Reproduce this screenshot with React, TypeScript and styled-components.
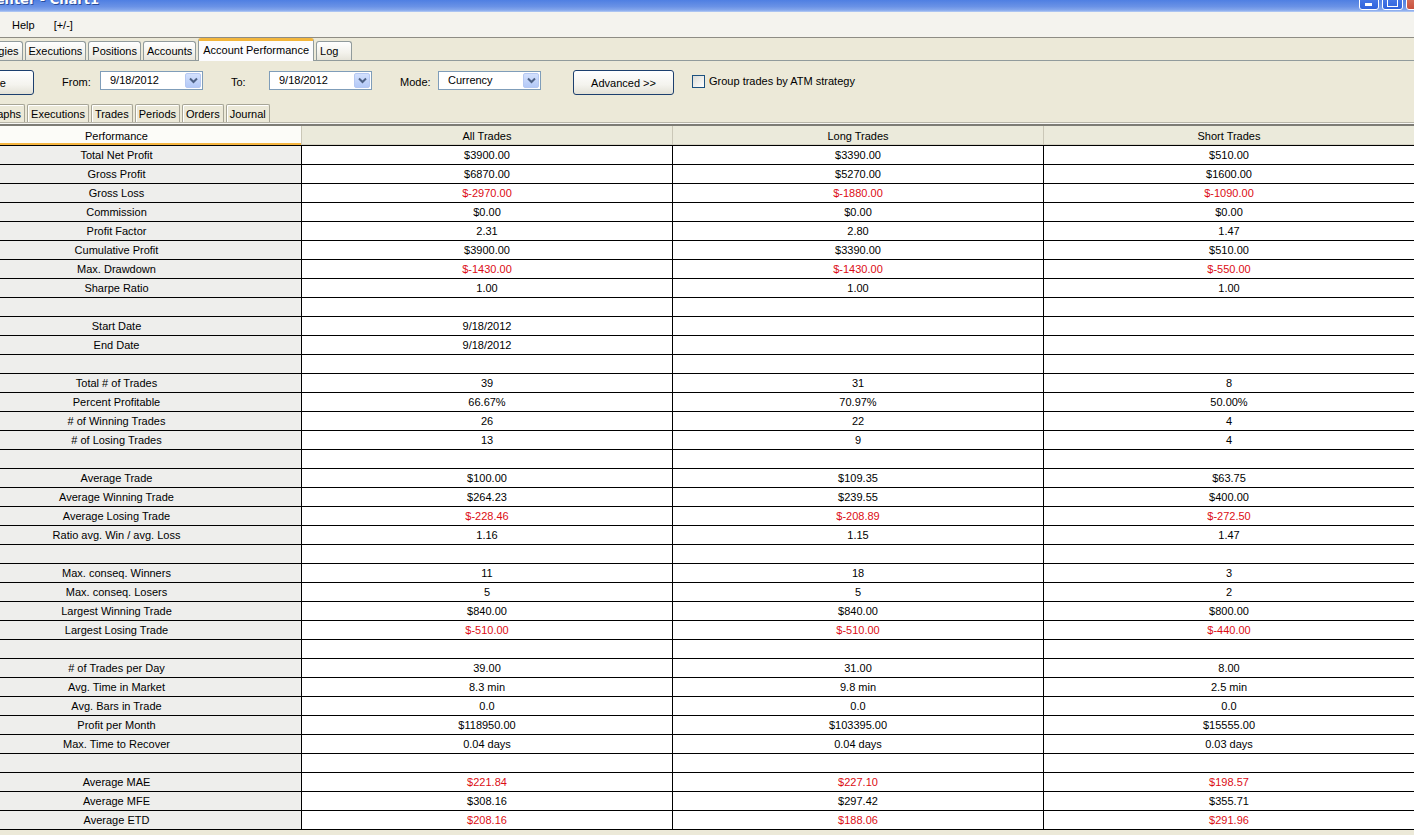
import React from "react";
import styled, { createGlobalStyle } from "styled-components";

const GlobalStyle = createGlobalStyle`
  html, body { margin: 0; padding: 0; overflow: hidden; }
  body { font-family: "Liberation Sans", Arial, sans-serif; font-size: 11px; color: #000; }
  * { box-sizing: border-box; }
`;

const Screen = styled.div`
  width: 1414px;
  height: 835px;
  overflow: hidden;
  background: #ece9d8;
`;

const Window = styled.div`
  width: 1482px;
  margin-left: -68px;
  display: flex;
  flex-direction: column;
`;

const TitleBar = styled.div`
  height: 12px;
  display: flex;
  justify-content: space-between;
  align-items: flex-start;
  overflow: hidden;
  background: linear-gradient(to bottom, #4f7fe2 0%, #6a92e6 55%, #86a8ec 85%, #b8cdf4 100%);
`;

const TitleText = styled.div`
  margin-top: -9px;
  margin-left: -4px;
  font-family: "DejaVu Sans", "Liberation Sans", sans-serif;
  font-weight: bold;
  font-size: 13px;
  line-height: 18px;
  color: #fff;
  text-shadow: 1px 1px 0 #2a4c9c;
`;

const WinButtons = styled.div`
  display: flex;
  gap: 3px;
  margin-right: -13px;
`;

const WinButton = styled.div<{ $w: number; $close?: boolean }>`
  width: ${(p) => p.$w}px;
  height: 21px;
  margin-top: -11px;
  border: 1px solid #fff;
  border-radius: 3px;
  background: ${(p) =>
    p.$close
      ? "linear-gradient(to bottom, #e08a78, #c8503c)"
      : "linear-gradient(to bottom, #5c8cf0, #2f62dc)"};
  position: relative;
`;

const MinBar = styled.div`
  position: absolute;
  left: 5px;
  bottom: 3px;
  width: 7px;
  height: 3px;
  background: #fff;
`;

const MaxBox = styled.div`
  position: absolute;
  left: 4px;
  bottom: 2px;
  width: 11px;
  height: 11px;
  border: 1px solid #fff;
  border-top-width: 3px;
`;

const MenuBar = styled.div`
  height: 26px;
  display: flex;
  align-items: center;
  gap: 19px;
  padding-left: 80px;
  background: #f4f3ee;
  border-bottom: 1px solid #8e8c84;
`;

const MenuItem = styled.span`
  font-size: 11px;
  line-height: 14px;
`;

const TabStrip = styled.div`
  height: 23px;
  display: flex;
  align-items: flex-end;
  gap: 2px;
  padding-left: 33px;
  background: #ece9d8;
  border-bottom: 1px solid #919b9c;
`;

const Tab = styled.div<{ $active?: boolean }>`
  height: ${(p) => (p.$active ? 23 : 19)}px;
  min-width: 36px;
  margin-bottom: ${(p) => (p.$active ? -1 : 0)}px;
  padding: 0 ${(p) => (p.$active ? 4 : 3)}px;
  display: flex;
  align-items: center;
  border: 1px solid #919b9c;
  border-bottom: none;
  border-top: ${(p) => (p.$active ? "3px solid #f3b63c" : "1px solid #919b9c")};
  border-radius: 3px 3px 0 0;
  background: ${(p) => (p.$active ? "#fcfcfe" : "linear-gradient(to bottom, #ffffff, #f3f2ec 60%, #e6e4da)")};
  padding-bottom: ${(p) => (p.$active ? 3 : 0)}px;
  white-space: nowrap;
`;

const Toolbar = styled.div`
  height: 40px;
  display: flex;
  align-items: center;
  gap: 28px;
  padding-left: 0;
`;

const XPButton = styled.div<{ $w: number; $ml?: number }>`
  width: ${(p) => p.$w}px;
  height: 25px;
  margin-left: ${(p) => p.$ml ?? 0}px;
  margin-top: 3px;
  border: 1px solid #1c3f6e;
  border-radius: 3px;
  background: linear-gradient(to bottom, #ffffff 0%, #f4f3ee 60%, #e3e1d6 100%);
  display: flex;
  align-items: center;
  justify-content: center;
  font-size: 11px;
`;

const Field = styled.div`
  display: flex;
  align-items: center;
`;

const FieldLabel = styled.span`
  width: 38px;
  margin-top: 2px;
`;

const Combo = styled.div`
  width: 103px;
  height: 19px;
  margin-top: -2px;
  border: 1px solid #7f9db9;
  background: #fff;
  display: flex;
  align-items: center;
  justify-content: space-between;
  padding: 0 1px 0 9px;
`;

const ComboArrow = styled.div`
  width: 16px;
  height: 15px;
  border: 1px solid #b5c8f2;
  border-radius: 2px;
  background: linear-gradient(to bottom, #d3e0fd, #b3c9f7);
  display: flex;
  align-items: center;
  justify-content: center;
`;

const CheckGroup = styled.div`
  display: flex;
  align-items: center;
  gap: 4px;
  margin-left: -10px;
`;

const CheckBox = styled.div`
  width: 13px;
  height: 13px;
  border: 1px solid #1c5180;
  background: linear-gradient(135deg, #dcdcd6, #ffffff);
`;

const SubTabs = styled.div`
  height: 21px;
  display: flex;
  align-items: flex-end;
  gap: 2px;
  padding-left: 49px;
`;

const SubTab = styled.div`
  height: 18px;
  padding: 0 3px;
  display: flex;
  align-items: center;
  border: 1px solid #a7a596;
  border-bottom: none;
  border-radius: 2px 2px 0 0;
  box-shadow: inset 1px 1px 0 #ffffff;
  white-space: nowrap;
`;

const Separator = styled.div`
  height: 4px;
  border-top: 1px solid #b8b6a9;
  background: #f7f7f4;
  border-bottom: 2px solid #7d7c75;
`;

const GRID = "369px 371px 371px 371px";

const HeaderRow = styled.div`
  height: 19px;
  display: grid;
  grid-template-columns: ${GRID};
`;

const HeaderCell = styled.div<{ $first?: boolean }>`
  display: flex;
  align-items: center;
  justify-content: center;
  padding-top: 1px;
  background: ${(p) => (p.$first ? "#fcfcf8" : "#ebeadb")};
  box-shadow: ${(p) => (p.$first ? "inset 0 -2px 0 #f5b540" : "inset 0 -1px 0 #d6d3c4")};
  border-left: ${(p) => (p.$first ? "none" : "1px solid #cac7b7")};
`;

const Table = styled.div`
  display: flex;
  flex-direction: column;
  border-bottom: 1px solid #000;
`;

const Row = styled.div`
  height: 19px;
  display: grid;
  grid-template-columns: ${GRID};
  border-top: 1px solid #000;
`;

const LabelCell = styled.div`
  background: #eeeeec;
  text-align: center;
  line-height: 18px;
  white-space: nowrap;
`;

const ValueCell = styled.div<{ $neg?: boolean }>`
  background: #fff;
  border-left: 1px solid #000;
  text-align: center;
  line-height: 18px;
  color: ${(p) => (p.$neg ? "#dc0c14" : "#000")};
  white-space: nowrap;
`;

type R = [string, string, string, string, boolean?];

const rows: R[] = [
  ["Total Net Profit", "$3900.00", "$3390.00", "$510.00"],
  ["Gross Profit", "$6870.00", "$5270.00", "$1600.00"],
  ["Gross Loss", "$-2970.00", "$-1880.00", "$-1090.00", true],
  ["Commission", "$0.00", "$0.00", "$0.00"],
  ["Profit Factor", "2.31", "2.80", "1.47"],
  ["Cumulative Profit", "$3900.00", "$3390.00", "$510.00"],
  ["Max. Drawdown", "$-1430.00", "$-1430.00", "$-550.00", true],
  ["Sharpe Ratio", "1.00", "1.00", "1.00"],
  ["", "", "", ""],
  ["Start Date", "9/18/2012", "", ""],
  ["End Date", "9/18/2012", "", ""],
  ["", "", "", ""],
  ["Total # of Trades", "39", "31", "8"],
  ["Percent Profitable", "66.67%", "70.97%", "50.00%"],
  ["# of Winning Trades", "26", "22", "4"],
  ["# of Losing Trades", "13", "9", "4"],
  ["", "", "", ""],
  ["Average Trade", "$100.00", "$109.35", "$63.75"],
  ["Average Winning Trade", "$264.23", "$239.55", "$400.00"],
  ["Average Losing Trade", "$-228.46", "$-208.89", "$-272.50", true],
  ["Ratio avg. Win / avg. Loss", "1.16", "1.15", "1.47"],
  ["", "", "", ""],
  ["Max. conseq. Winners", "11", "18", "3"],
  ["Max. conseq. Losers", "5", "5", "2"],
  ["Largest Winning Trade", "$840.00", "$840.00", "$800.00"],
  ["Largest Losing Trade", "$-510.00", "$-510.00", "$-440.00", true],
  ["", "", "", ""],
  ["# of Trades per Day", "39.00", "31.00", "8.00"],
  ["Avg. Time in Market", "8.3 min", "9.8 min", "2.5 min"],
  ["Avg. Bars in Trade", "0.0", "0.0", "0.0"],
  ["Profit per Month", "$118950.00", "$103395.00", "$15555.00"],
  ["Max. Time to Recover", "0.04 days", "0.04 days", "0.03 days"],
  ["", "", "", ""],
  ["Average MAE", "$221.84", "$227.10", "$198.57", true],
  ["Average MFE", "$308.16", "$297.42", "$355.71"],
  ["Average ETD", "$208.16", "$188.06", "$291.96", true],
];

const Chevron = () => (
  <svg width="9" height="7" viewBox="0 0 9 7">
    <path d="M1 1.5 L4.5 5 L8 1.5" fill="none" stroke="#4d6185" strokeWidth="2" />
  </svg>
);

const ComboBox = ({ value }: { value: string }) => (
  <Combo>
    <span>{value}</span>
    <ComboArrow>
      <Chevron />
    </ComboArrow>
  </Combo>
);

export default function App() {
  return (
    <Screen>
      <GlobalStyle />
      <Window>
        <TitleBar>
          <TitleText>Control Center - Chart1</TitleText>
          <WinButtons>
            <WinButton $w={20}>
              <MinBar />
            </WinButton>
            <WinButton $w={21}>
              <MaxBox />
            </WinButton>
            <WinButton $w={21} $close />
          </WinButtons>
        </TitleBar>
        <MenuBar>
          <MenuItem>Help</MenuItem>
          <MenuItem>[+/-]</MenuItem>
        </MenuBar>
        <TabStrip>
          <Tab>Strategies</Tab>
          <Tab>Executions</Tab>
          <Tab>Positions</Tab>
          <Tab>Accounts</Tab>
          <Tab $active>Account Performance</Tab>
          <Tab>Log</Tab>
        </TabStrip>
        <Toolbar>
          <XPButton $w={102}>Generate</XPButton>
          <Field>
            <FieldLabel>From:</FieldLabel>
            <ComboBox value="9/18/2012" />
          </Field>
          <Field>
            <FieldLabel>To:</FieldLabel>
            <ComboBox value="9/18/2012" />
          </Field>
          <Field>
            <FieldLabel>Mode:</FieldLabel>
            <ComboBox value="Currency" />
          </Field>
          <XPButton $w={101} $ml={4}>
            Advanced &gt;&gt;
          </XPButton>
          <CheckGroup>
            <CheckBox />
            <span>Group trades by ATM strategy</span>
          </CheckGroup>
        </Toolbar>
        <SubTabs>
          <SubTab>Graphs</SubTab>
          <SubTab>Executions</SubTab>
          <SubTab>Trades</SubTab>
          <SubTab>Periods</SubTab>
          <SubTab>Orders</SubTab>
          <SubTab>Journal</SubTab>
        </SubTabs>
        <Separator />
        <HeaderRow>
          <HeaderCell $first>Performance</HeaderCell>
          <HeaderCell>All Trades</HeaderCell>
          <HeaderCell>Long Trades</HeaderCell>
          <HeaderCell>Short Trades</HeaderCell>
        </HeaderRow>
        <Table>
          {rows.map((r, i) => (
            <Row key={i}>
              <LabelCell>{r[0]}</LabelCell>
              <ValueCell $neg={r[4]}>{r[1]}</ValueCell>
              <ValueCell $neg={r[4]}>{r[2]}</ValueCell>
              <ValueCell $neg={r[4]}>{r[3]}</ValueCell>
            </Row>
          ))}
        </Table>
      </Window>
    </Screen>
  );
}
